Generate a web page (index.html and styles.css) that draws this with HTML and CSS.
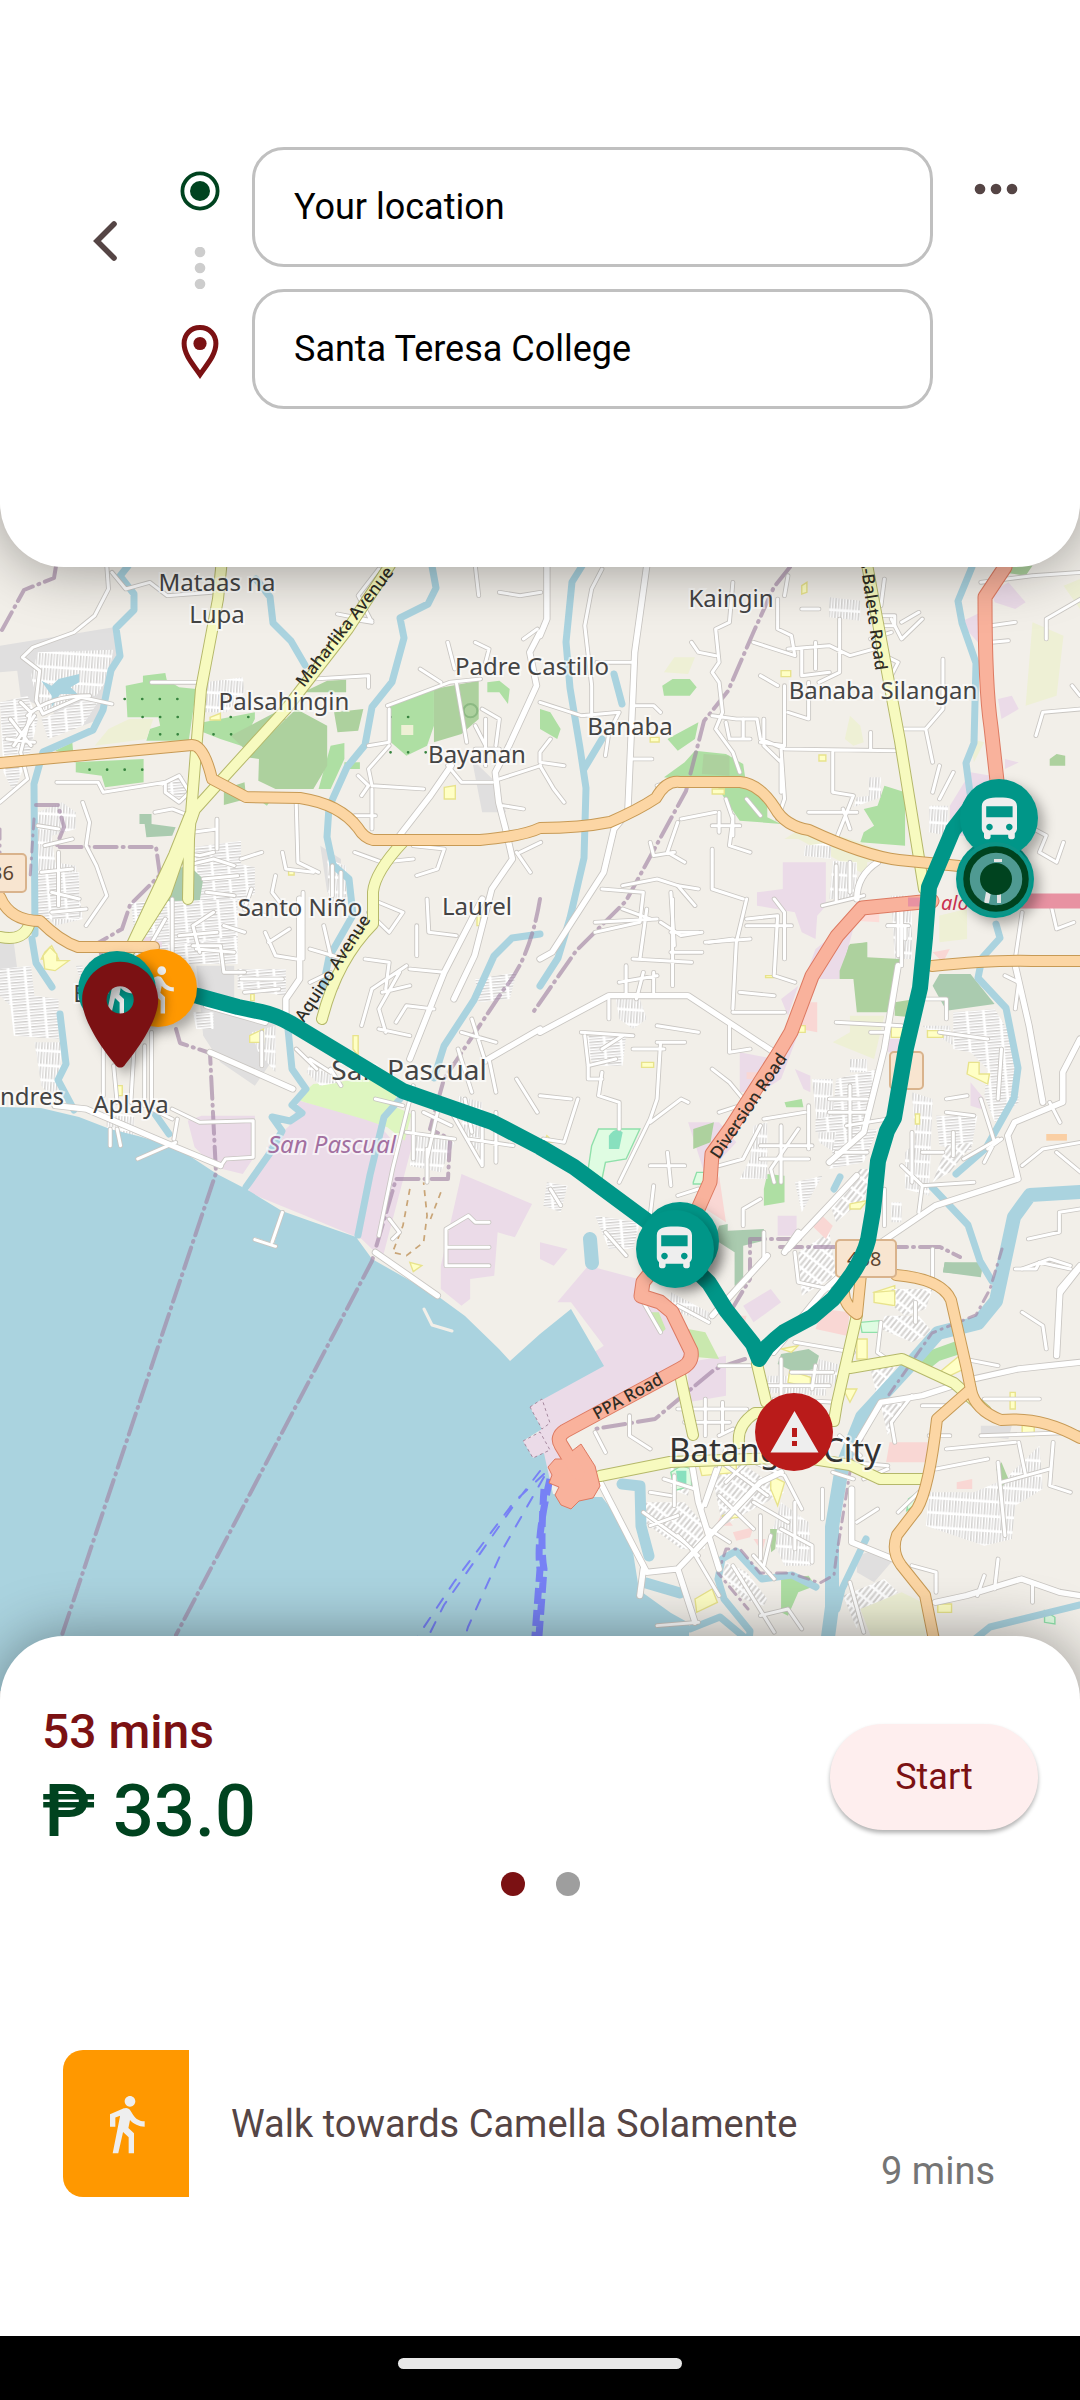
FILE: index.html
```html
<!DOCTYPE html>
<html lang="en">
<head>
<meta charset="utf-8">
<meta name="viewport" content="width=device-width, initial-scale=1">
<title>Trip to Santa Teresa College</title>
<link rel="stylesheet" href="styles.css">
</head>
<body>
<header class="search">
  <button class="icon-button back" type="button" aria-label="Back">
    <svg width="28" height="44" viewBox="0 0 28 44"><path d="M24 5 7 22l17 17" fill="none" stroke="currentColor" stroke-width="5.600" stroke-linecap="round"/></svg>
  </button>
  <div class="stops" aria-hidden="true">
    <svg width="40" height="40" viewBox="0 0 40 40"><circle cx="20" cy="20" r="17.6" fill="none" stroke="#00431f" stroke-width="3.8"/><circle cx="20" cy="20" r="10" fill="#00431f"/></svg>
    <svg width="40" height="42" viewBox="0 0 40 42" fill="#cdcdcd"><circle cx="20" cy="5" r="5.3"/><circle cx="20" cy="21" r="5.3"/><circle cx="20" cy="37" r="5.3"/></svg>
    <svg width="40" height="54" viewBox="0 0 40 54"><path d="M20 2.6C10.5 2.6 4.100 9.600 4.100 18.500 4.100 30 13.500 40 20 49.500 26.500 40 35.900 30 35.900 18.500 35.900 9.600 29.500 2.600 20 2.600Z" fill="none" stroke="#7b1113" stroke-width="5"/><circle cx="20" cy="18.500" r="6.600" fill="#7b1113"/></svg>
  </div>
  <form class="fields">
    <input class="field" type="text" aria-label="From" value="Your location">
    <input class="field" type="text" aria-label="To" value="Santa Teresa College">
  </form>
  <button class="icon-button more" type="button" aria-label="More options">
    <svg width="44" height="12" viewBox="0 0 44 12" fill="currentColor"><circle cx="6" cy="6" r="5.300"/><circle cx="22" cy="6" r="5.300"/><circle cx="38" cy="6" r="5.300"/></svg>
  </button>
</header>

<main class="map">
<svg class="map-canvas" viewBox="0 504 1080 1197" preserveAspectRatio="xMidYMid slice" role="img" aria-label="Route map, San Pascual to Batangas City">
<defs>
  <pattern id="blocks-v" width="17" height="44" patternUnits="userSpaceOnUse" patternTransform="rotate(4)"><rect width="17" height="44" fill="#cfcdcb"/><path d="M4 0v44M12 0v44" stroke="#fff" stroke-width="5"/><path d="M0 5h17" stroke="#fff" stroke-width="8"/></pattern>
  <pattern id="blocks-h" width="48" height="17" patternUnits="userSpaceOnUse" patternTransform="rotate(-5)"><rect width="48" height="17" fill="#cfcdcb"/><path d="M0 4h48M0 12h48" stroke="#fff" stroke-width="5"/><path d="M5 0v17" stroke="#fff" stroke-width="8"/></pattern>
  <pattern id="blocks-d" width="26" height="40" patternUnits="userSpaceOnUse" patternTransform="rotate(38)"><rect width="26" height="40" fill="#d4d2d0"/><path d="M5 0v40M18 0v40" stroke="#fff" stroke-width="7"/><path d="M0 5h26" stroke="#fff" stroke-width="8"/></pattern>
  <path id="bus" d="M4 16c0 .88.39 1.670 1 2.220V20c0 .55.45 1 1 1h1c.55 0 1-.45 1-1v-1h8v1c0 .55.45 1 1 1h1c.55 0 1-.45 1-1v-1.780c.61-.55 1-1.340 1-2.220V6c0-3.500-3.580-4-8-4s-8 .5-8 4v10zm3.500 1c-.83 0-1.500-.67-1.500-1.500S6.670 14 7.500 14s1.500.67 1.500 1.500S8.330 17 7.500 17zm9 0c-.83 0-1.500-.67-1.500-1.500s.67-1.500 1.500-1.500 1.500.67 1.500 1.500-.67 1.500-1.500 1.500zm1.500-6H6V6h12v5z"/>
  <path id="walk" d="M13.500 5.500c1.100 0 2-.9 2-2s-.9-2-2-2-2 .9-2 2 .9 2 2 2zM9.800 8.900L7 23h2.100l1.800-8 2.100 2v6h2v-7.500l-2.100-2 .6-3C14.800 12 16.800 13 19 13v-2c-1.900 0-3.500-1-4.300-2.400l-1-1.600c-.4-.6-1-1-1.700-1-.3 0-.5.1-.8.1L6 8.300V13h2V9.600l1.800-.7"/>

  <g id="streets">
    <g transform="translate(0 560) scale(.3444 .3333)">
      <path d="M310 20l5 70-40 80-60 50-120 45-30 30 50 40-10 90 20 40 110-50 90 20M325 40l40 50 70-20 50 40 130-10M60 430l30 30-30 120 20 80-80 70M80 470q60-60 180-60M165 670h120l15 30 180-30M240 730l20 60-10 70 30 60 30 90-60 90M450 760l50-10 50 20M440 370h150M910 360l160-10v35M1100 30l-60 80 40 80-60-10M980 165l100 20M1380 20l10 90M1450 100l60 10 60-10M1220 330l60 40M1125 440l180-70 90-10M1325 370l30 180M1130 450v100l-60 10M1130 560l-60 70 10 50 150 10M1080 690v120M1200 860l90 10-20 60-60 20M1300 620l40 50h90M1380 250l40 20-10 40M1520 240l40-30M1400 450l50 30-10 80M1450 660l120-40M1460 740l60 10M860 730l5 180 60 30M820 880l10 50 80 10M800 950l-10 50 30 40M1100 1030l70 30-40 60-60-60M1240 1020l5 100 80 10M630 780v90M560 820l70-10M700 900l60-20M730 990l-20 60 60 20M880 1000v200M940 1100l20 90M1210 1100v90M1030 770h60M1030 880l80 30 90-10M1300 250l20 80M1040 650l30 30-20 30M1510 880l60-30M1500 880l40 60M480 670l40-20 30 50-30 30-40-30Z"/>
      <path d="M520 880l60 10 40-10M540 920l80-20 60 20M590 960l100-10M600 1000l80 10M620 1060l-60 40 20 80M650 1100l60 20M480 1080l-50 90M520 1130l110-10M570 1170l110 10M110 800l60 10M130 860l80-20M120 940l90-10M150 1000l80 20M150 1060l100-10M170 880v160M30 480l60 80M20 540l80 10M100 470l-60 90M1380 500l30 60 0 60M1410 480v90M1380 570h70M990 940v80M965 920v90"/>
      <path class="wide" d="M1568 220l-30 60 20 100-80 180-40 80 10 90 20 80 20 90-60 90-50 200-60 130M1310 620l-60 90-90 120"/>
    </g>
    <g transform="translate(540 560) scale(.3444 .3333)">
      <path class="wide" d="M310 20l-35 260-20 480-40 50-30 130-150 240L0 1200M20 20v160L0 230"/>
      <path d="M180 30l-30 60-20 110 20 180v90M0 430l120 40 110-10-30 60-10 70M275 310h-110M270 440h60l20 20M265 600h60M560 70l-10 120-40 20 10 100-20 30 20 30 10 90-20 50 50 70 20 60M440 250l20 30 50 10M690 120v90l40 20 10 60-120-40M720 50l-10 60M720 270l120-10 60 30 70-20M760 270v80l80-10M800 250v80M870 180v160l-60 30M690 380l-50-30M710 380v180l-70-10M500 470l70 10 60 0 10 60 70 30 320 5M650 480v80l50 50M850 580v120l60 10-50 130 80 30M700 570l10 150-20 60M780 370v110l-60-20M1020 180l30 60 60-60M1000 290l40 20-20 40M1170 300v150l-50 60 20 100M1040 510h80M960 520v50M1000 60l-10 80M340 680l60-20 100 0M540 720l20 60-10 80 60 20M400 790l-30 90 50 30M410 780l100-20M320 850l10 40 60-10M180 990l120 10-10 90-130 30M380 1000l10 160M400 980l60 10M500 870v120l90 30M560 770v60M600 1100h130M700 600v100M480 1150l130-10M680 1020l30 40v140M780 760l140 0M880 750l20 60M1160 720l40-80M1160 620l-20 80M1280 70l150-20 140-10M1310 200l70-10M1310 250l50-5M1470 240v-60l100-60M1440 530l20-70 110-10M1545 380l23 30M1380 780l90 50-20 50 50 30 20-60M1400 1060l-20 140M1480 1020l20 90 50-20M30 540l-30 40 0 30 70 10M0 620l40 70 30 40"/>
      <path d="M240 980l100-20 60 20 50 60M240 1050l80 30M350 1090l60 40 60-10M520 760v60M500 800h80M600 720l40 50M760 150l50 0M980 170h50v30h-50ZM1100 160l-50 30M960 240l60-20M540 490l10 50 60 0M590 480v60M820 1040l120-30M860 920v110M900 910v90M1040 1040v150M1010 1100h60"/>
      <path class="wide" d="M980 910q-60 40-60 110"/>
    </g>
    <g transform="translate(0 900) scale(.3444 .3333)">
      <path class="wide" d="M1400 0l-30 60-80 160-100 260M870 0v240l-40 60v60M160 620l90 10 250 110 140 60M600 320l170 50M1090 1060l180 130M1568 390l-150 90M610 460l240 110"/>
      <path d="M300 400v190M330 500l10 110M390 430l-10 180M420 440v180M440 400v230l60 30M500 630l80 40 155-5v110l-80 5-10 15M515 660l-10 60M400 780l110-50M320 690v50M340 690l10 50M820 940l-30 90M740 1022l60 20M1420 970h-40l-20-20-65 40v110h125M1300 1045h120M1200 560l-60 250-40 200M1230 640l80 40M1240 600l60 20 100 180M1350 600l20 100M1440 640v150M1480 700l50 30M1180 200l-100 70-30 110M1060 180l70 10-10 80M1190 210l100 10M1150 370l30-50 80 10M1100 390l90 20M1330 450l40 130M1420 480l20 100M1500 540l60 100M1240 750v100M1130 960l30 40-20 20M900 150l100 30M900 250l60-30M900 480l60 40M860 450l60 60M960 510l30 50M500 0v200M560 140h80l10 80h60M1090 600l80 20M770 100l30 70 60 10M780 130l60-40M700 240l120 0M710 280l100-10M760 400v100M1110 280l80-20M1160 220l-60 110 20 70M1340 400l100 30M1370 360l40 130M1200 640v140M1270 640l-30 140M1180 700l140 20M1360 720l130 20M1400 660v140"/>
    </g>
    <g transform="translate(540 900) scale(.3444 .3333)">
      <path class="wide" d="M0 400l200-110 230 0 250 170M1040 200l-40 250-60 250-100 90M1380 200l40 180 40 230M1568 420l-50 100 0 90-140 60-20 40 30 130-240 80-200 140-130 120-140 180M720 1050l200-220M750 1000l-40 60"/>
      <path d="M160 70l180-10M310 30l-20 150M385 0v260M380 100h80M380 160h90M270 180l170 10M300 220l-20 80M600 0l-30 130-10 200M490 130l70-10M600 60l90-10-10 180 60 20M580 280l100 10M560 340h150M550 380v80l60-10M120 400l150 10M130 410l10 90 80-20M200 300v60M340 380l120 20M340 430h80M350 430l-10 170-20 60-90 190M180 520l-10 70 60 20v80M320 670l90-70 20 10M110 600l-40 130-60-10M0 590l90 10M500 510l50 40 40 50M520 640l60-20M520 800l70-20 50-100M650 660l120-20M750 690l-80 120 10 40M860 370l190 10M960 400l50 0M890 680l120-20M1110 860l150-10M1180 600l60-10M1180 640l80 10M1280 600l40 130-30 60M1340 720l-40 30M1480 610l30 60M1400 800l60-50 110-20M1500 760l70 60M1568 930l-60 10v60l-90 20M1400 1110l80-30 60 20M1568 1110l-60 80M1110 860l-10 80M370 760l10 100M320 800h100M330 860l-10 90M400 890l60-20M30 870l30 50M190 1000l60 70M740 1060l10 90 90 20M650 1000v80M1000 870v110M640 900l-50 30v50M1350 230l40 20-10 80M1100 300h80v60"/>
      <path d="M250 200v90M330 220v60M230 250l110-20M140 500v40h40M180 450l60-40M270 450h90M640 740l150 0M640 780h140M700 680v170M780 620v130M840 600h110M840 640h110M900 560v170M860 760h90M1050 800l60 60M1080 700v150M1110 760h60M1200 700v70M1230 780l100-60M1010 80h50v40M1050 0v200M1160 400l140 20M1340 450l-10 150"/>
    </g>
    <g transform="translate(540 1250) scale(.3444 .3333)">
      <path class="wide" d="M170 690l90 180 50 100 90-10 240-260 60-30M440 640l20 120 60 200M660 20l-160 180M905 720v160l120 50M1568 340l-180 20-130 30M910 600l80-140 120-20 90-30M1568 1040l-60-10-110-40-160 50-90 20M1500 320l10-200 58-70M300 960l-10 80M400 960l50 160"/>
      <path d="M300 160l50 90M400 170l90 50M520 350h90M640 410h200M680 450l180 10M700 440v-110M740 280l170 30M990 220l-10 90 40 30M560 540l-40 20M470 780l40-120M520 740l100 100M380 740l-60-10M300 790l120 90M320 830l80-30M450 720l-90-30M600 640l-60 60M560 950l60 100 60 100M620 920l60 70M670 860l-20 90M700 840l90 50v50M490 840l60 40M580 620l130 60 50 100M260 500v60l60 40M160 550l30 60M850 670l60 20M980 780l-60 40M900 1000l40 150M1080 440l-60 80 10 60M1130 560h60M1290 450h160M1280 560l290-10M1380 60h60l10-20 90 20M1400 190l60 40 10 70M1490 580l-10 130 60 20M1430 1000v60M1330 930l-10 90M1290 980l-20 60M1080 950l70 20 0 60M1110 470h100M440 900l80 140M850 370h-120M800 350l-10 70M1010 660l-70 30M1100 730l-60 60"/>
      <path d="M420 520h130M400 480h200M480 450v110M530 460v90M390 680v90M500 620l160 120M540 600l-60 170M620 760l100 60M640 800v130M740 760v140M820 720v90M400 860l60 60M340 1130l120-10M640 1100l80-20 40 60M870 560l60 60M900 640l110 10M1150 660l150-30M1180 600l200-20M1330 640l20 220M1390 580l20 100M1230 330l100 20M1090 160v60M1140 0v100M1340 700l140-40"/>
    </g>
  </g>

  <g id="secondary">
    <path d="M222 560l-4 40-17 90-12 150-1 60M195 810l-29 84-38 60M390 566l-42 64-62 80-60 66-36 40-16 40-46 98M403 843q-28 30-30 50v32q-36 36-51 95M866 560l34 182 24 148M0 938q25 5 30-15"/>
    <path d="M857 1316l-20 88-3 18q-30 0-44-8l-35 0q-18 12-16 30M757 1365l9 38M850 1369l52-9 52 24 32 28M679 1371l14 65M600 1477l70-14 130-5 50 8 30 14h45"/>
  </g>
  <g id="primary">
    <path d="M0 764l192-18q12 0 20 34l34 18 54 1q40 6 58 30 6 10 15 12h107q44-4 60-12 40 0 70-6 28-12 46-24 10-18 24-16h60q20 2 35 26 10 18 34 22 56 26 90 30l60 6M0 898q10 24 40 24 20 20 38 26h76M932 967q60-6 100-5h48"/>
    <path d="M896 1276q46 4 55 25l16 70 4 20q4 20 30 30 40-4 79 18M971 1390l-34 30q-8 70-20 90l-20 26q-6 16 4 30l24 30 10 50M861 1275l-4 40q-14-10-13-24"/>
  </g>
  <g id="trunk">
    <path d="M1005 568l-20 30q0 90 6 130l10 90M932 902L862 909 837 937 812 977 791 1033 778 1055 730 1130 712 1155 710 1183 698 1210 660 1262 643 1283 641 1297 660 1303 672 1313 691 1352Q693 1364 680 1370L565 1432Q556 1438 561 1446L578 1474"/>
  </g>
</defs>

<rect y="504" width="1080" height="1197" fill="#f2efe9"/>

<!-- land use -->
<g transform="translate(0 560) scale(.3444 .3333)">
  <path fill="#e0dfdf" d="M0 260l330-55 20 75-60 200-50 20-180-85-10-80-50 5ZM1370 600l60 60 40 100-70 0ZM930 860l60 40 0 100-40 0Z"/>
  <path fill="url(#blocks-v)" d="M110 280l220-8-20 90-30 48h-50l-110 60-30-120ZM110 760l70-30 40 30v50l-70 20 10 80 60 10 20 160-80 20-60-100ZM595 370l110-15 5 45-50 60h-70ZM950 900l55 20v110l-50 10Z"/>
  <path fill="url(#blocks-h)" d="M0 430l80-20 30 70-20 90-50 130-30-60ZM120 480l130-60 40 0-50 80-100 40ZM520 870l180-25v70l40 10v80l-50 20v190H370l80-160 130-30 10-70-60-30ZM470 680l60-30 20 60-50 10ZM110 940h120v140H110Z"/>
  <path fill="#aedfa3" d="M365 380l50-10v-20l65-8 4 20 36 23 50 5-22 155H425l10-35 30-10-5-25h-90ZM160 575l50-25 5 60 202-10v70l-112 15-10-35-75-10v-50ZM590 490l150-30v20l-40 80-60-20-50-20ZM960 560l40-8v48l-40 90h-35ZM1130 440l130-50v110l-20 60-60 30-45-40ZM1415 370l35-5 30 25-5 45-25-35h-35ZM1000 610h45v20h-45ZM755 725l30 0-10 15Z"/>
  <path fill="#add19e" d="M715 595l145-145 90 50v120l-40 70H800l-50-25 2-65ZM670 530l130-70 30 20-120 90ZM880 400l70-35 55-3v38ZM970 460l85-10-15 65-60 5ZM1260 390l130-25v115l-50 45-80 25ZM650 690l60-20 5 50-65 18Z"/>
  <path fill="#aacbaf" d="M405 765h35v30l70 10-10 25-75 5-5-40h-15ZM480 935l70-15 40 40-10 65-130 10Z"/>
  <path fill="#eef0d5" d="M275 560l40-50 60-30 70 0-20 60ZM1165 498h35v30h-35Z"/>
  <path fill="#ffffc5" stroke="#e8e38c" stroke-width="4" d="M610 475l30-12v20h-30ZM1290 685l32-5v40h-32ZM838 932h16v16h-16ZM130 1180l20-20 20 40h-50ZM1385 1070h10v30h-10Z"/>
  <path fill="#ebdbe8" d="M395 1130l75-20v55h-75Z"/>
  <path fill="#aad3df" d="M120 365l30 15 20-20 60-15v25l-25 15 20 20-50 0-25 40 0-35Z"/>
  <path stroke="#37843f" stroke-width="8" stroke-linecap="round" stroke-dasharray="0 51" d="M362 420h190M414 474h120M465 526h80M260 632h180M620 526h60M670 474h60M1134 474h60M1134 580h110"/>
  <circle cx="1366" cy="455" r="20" fill="none" stroke="#8cb983" stroke-width="6"/>
</g>
<g transform="translate(540 560) scale(.3444 .3333)">
  <path fill="#ebdbe8" d="M705 910h125v130l-25 30-5 70-40-20-20-60-110-20v-40l75-10ZM1310 100l50-30 50 60-30 20-60-20ZM1220 190l60-30v100ZM1330 420l40-10 20 40-50 30ZM1190 740l60-100 60 10-60 180h-60ZM1350 600l40 10-40 20Z"/>
  <path fill="#aedfa3" d="M0 450l30 10 30 50-10 30-50-30ZM355 380l30-20 50 0 20 25-20 25-75 0ZM370 540l90-50-10 50-50 35ZM420 610l30-35 90 10 50 30 10 70 60 30v60l40 20-120-10-40-60-30-50-150-20ZM940 750l40-10 20-60 60 20 0 160-130-10 10-30 30-20Z"/>
  <path fill="#add19e" d="M475 585l75 5v60l-80-5ZM1340 40l30-20h60l-20 30ZM1480 600l20-15 25 5v30h-45ZM890 1160l60-10v50h-70Z"/>
  <path fill="#eef0d5" d="M360 340l30-45 60 0-20 50ZM885 540l15-70 30 30 10 50-30 10ZM710 840l60-40 160 50 100 40-80 20v40l-200-110ZM1430 190l90 40-20 180-90 30ZM1520 80l48-20v90ZM1160 1070l80-20-10 80-70 15ZM1250 540l40 10-30 60Z"/>
  <path fill="url(#blocks-v)" d="M840 115l90 10v60l-90-10ZM955 655l35 0 0 60-80 30 10-30 35-5ZM1130 740h55v90l-55-10ZM770 860l75-10v50l-80-10ZM850 905l70 5 0 110-80 0ZM1020 1010l60 0v190h-50Z"/>
  <path fill="#fddcd8" d="M940 1050l45-10v50l-70-5Z"/>
  <path fill="#ffffc5" stroke="#e8e38c" stroke-width="4" d="M700 335h28v18h-28ZM760 80l15-10v30l-15 5ZM810 588h20v18h-20ZM500 690h35v15h-35ZM320 535h26v14h-26Z"/>
</g>
<g transform="translate(0 900) scale(.3444 .3333)">
  <path fill="#e0dfdf" d="M570 200h110v100l120 70v100l-60 90-100-70-50-80ZM0 130l40 0 10 80-50 10Z"/>
  <path fill="#ebdbe8" d="M545 665l40-15h155v120l-35 55-80-20-60-60ZM720 880l60-140 60-60 30-75 220 60 50 60 60-30v30l-90 355-60-60-140-60ZM1340 825l205 90-50 100-50-15-10 130-70 10v60l-25 20-60-50 0-70 22-100Z"/>
  <path fill="#def6c0" d="M860 600l50-45 100-10 80-10 60 30v60l45 20-20 80-50-40-70-25-170-50Z"/>
  <path fill="url(#blocks-h)" d="M0 210l90-10 10 90 70 10 0 120-130-10-10-90-30-30ZM380 10l310-10v110l-190 30-110-40ZM690 210l140 0v80l-140-20ZM1380 240l120-20-20 80-90 10ZM560 340h60v50h-50ZM220 200h20v60Z"/>
  <path fill="url(#blocks-v)" d="M100 430l80 0-10 190-50-60ZM730 400l70-20v140l-50-60ZM1200 700l120 30-40 90-90-20ZM900 490l90 60-60 10-40-40ZM1330 590l70 20v150l-50-30ZM310 640l80 10v60l-80-10Z"/>
  <path fill="#ffffc5" stroke="#e8e38c" stroke-width="4" d="M125 170l20-25 20 20 0 20 35 0-40 30-30-5ZM335 560h20v30h-20ZM725 410l40-20v40h-40ZM1025 410l15 0v60l-15-20ZM1190 1090l35 10-25 18ZM728 285h10v20h-10Z"/>
  <path fill="#f3d6d8" d="M960 240h25v30h-25Z"/>
  <path fill="none" stroke="#c9a577" stroke-width="5" stroke-dasharray="18 16" d="M1190 870l-20 110-30 80 40 10 50-40 10-80-10-100M1280 880l-30 80"/>
</g>
<g transform="translate(540 900) scale(.3444 .3333)">
  <path fill="#ebdbe8" d="M800 150l120-100-50 190-60 0-110 300-60 40-60 0V460l100 20ZM430 670l90 0 50 60-90 100ZM700 300l50-40-30 90ZM0 1030l80 20-40 50-40-20ZM690 950h55v60h-55ZM740 510l45 20v50l-20-10ZM1250 550l40 50-10 30-30-10ZM1010 420h50v40h-50Z"/>
  <path fill="#add19e" d="M870 215l30-80 50-5v45l95 5-30 160-95 0-10-100-40 0ZM1030 310l60-10-10 55-50-5ZM445 690l60-20-10 60-50 20Z"/>
  <path fill="#aacbaf" d="M1140 260l20-35 90 0 70 90-140 20ZM520 980l25-5 0 20 105-5v35l-60 15v120h-25l0-100-60-40ZM1175 1090l110 10-5 35-110-15Z"/>
  <path fill="#aedfa3" d="M650 870l10-45 50 5v80l-60 10ZM710 610l50-10 5 25h-50Z"/>
  <path fill="#dffce2" stroke="#8fe0aa" stroke-width="4" d="M150 740l20-50 120 0-40 90-60 10-10 50-40-30ZM445 850l10-30 25 0-5 35-30 0Z"/>
  <path fill="#88e0be" d="M200 710q20-30 40-10l-10 50h-30Z"/>
  <path fill="#eef0d5" d="M850 430l50-30 0-50 100 0-30 130ZM1160 50l80-20v90l-80 10Z"/>
  <path fill="url(#blocks-v)" d="M220 300l70 0 20 60-40 30-40-30ZM790 540l60 0v60l50 20v170l-90-60ZM620 680l40-10v170l-80 0 30-60ZM1080 580l60 20-10 290-70-20 0-110 30-30ZM1110 380l80 0 10 60ZM900 480h50v40h-50ZM1020 910h30v60h-30Z"/>
  <path fill="url(#blocks-h)" d="M860 540l120-30-40 190-140 0 0-40 50-10ZM130 410l120 0-10 90h-80l-20-30ZM1200 340l120-10 60 100 10 180-70 60-30-80 10-80-50-50-50-10ZM860 700l120-10-40 100-100 20ZM740 850l80-20-60 110ZM20 850l60 10-20 80-50-20ZM1150 650h120l-20 110-90-20ZM160 950l130 20-20 80-70 0Z"/>
  <path fill="url(#blocks-d)" d="M840 910l90-100 40 0-30 90-80 70ZM1180 740l80-10-70 90-50 30ZM750 1060l90-60 20 130-100 60Z"/>
  <path fill="#f9d7d4" d="M770 310h35v90l-50-10ZM520 830l20 140-60-40ZM790 980l30-30 30 30-20 40ZM1140 160l50-10-20 40ZM600 520h40v20h-40Z"/>
  <path fill="#ffffc5" stroke="#e8e38c" stroke-width="4" d="M1020 380l50 0v35h-50ZM1125 395h45v20h-45ZM1245 490h30v35l30 0-5 30-60-30ZM295 490h35v15h-35ZM900 915l50-10-20 25h-30ZM1090 645h12v30h-12ZM750 380h20v20h-20ZM655 230h35v6h-35ZM20 710l20 20h-30ZM970 1180l60-20v40Z"/>
  <path fill="#facfa4" d="M1470 705h60v20h-60Z"/>
</g>
<g transform="translate(540 1250) scale(.3444 .3333)">
  <path fill="#ebdbe8" d="M140 50l145 40 0 60 90 50 50 120-50 50-340 220 80 110 50 70-60 30-50-80-60-40 0-180 0-80 90-60 100-70-95-130-40 0ZM430 340l110-20 0 120-110 20ZM590 170l80-50 30 40-80 60Z"/>
  <path fill="#c9e8ae" d="M430 240l50 10 40 80-60-5ZM320 190l25 0 20 50-10 10Z"/>
  <path fill="#aacbaf" d="M700 315l80-15 30 20-10 40-60 10-50-25ZM1175 40l110 0-5 40-110-10Z"/>
  <path fill="#aedfa3" d="M1090 320l135-50-5 45-60 20-30 25ZM700 990l80-10 20 30-50 20-30 70-20-10Z"/>
  <path fill="#f9d7d4" d="M800 240l20-60 80 10-10 70ZM1005 640l10-60 110 0v60ZM510 830l20-40 30 40ZM560 200l40 0-10 40ZM620 870l35 0-10 40ZM560 850l60-15-10 30-40 10ZM1210 700l45-10v30h-45Z"/>
  <path fill="url(#blocks-v)" d="M700 760l80 60 10 130-80 0-40-90ZM1130 730l130 0 90-40 100-100 10 130-80 50-10 100-80 20-170-60ZM380 130l130 70-20 20-120-40ZM650 380l180 0 0 60-180-10ZM810 330l70 20-10 60-70-20Z"/>
  <path fill="url(#blocks-d)" d="M300 760l120 0 50 60 10 80-70 0-120-90ZM500 680l80-40 130 90-90 50-90 50ZM540 940l60 30 60 80-10 20-60-20-60-70ZM880 1040l120-50 40 40-110 60-10 50ZM960 360l80-20-60 110ZM1000 200l100 0 40 50-60 30-90-40ZM1020 120l120 0-20 60-60 20-50-40ZM990 470l80-30-60 120ZM380 650l60 10-10 80-50-20Z"/>
  <path fill="#ffffc5" stroke="#e8e38c" stroke-width="4" d="M725 365l60 20v30l-65-15ZM970 130l60-5v45l-60-10ZM920 270h30v60h-30ZM1160 370l70-60v50l-60 30ZM670 680l40 20-20 70-20-50ZM460 640l110 0v30l-100 10ZM450 1050l50-30 15 40-60 30ZM880 420h40l-20 40ZM1365 430h15v50h-15ZM1400 530h35v30h-35ZM1155 1065h40v25h-40ZM530 800l30-10 20 15-50 5ZM700 300l50-10-20 20Z"/>
  <path fill="#dffce2" stroke="#8fe0aa" stroke-width="4" d="M380 670l30-20 30 10 0 50-50 15ZM930 220l55-5v35l-50 0ZM1070 750l40-30-15 45-30 20ZM1465 1085l30 20v20l-30-5Z"/>
  <path fill="#88e0be" d="M395 665h30v40h-25Z"/>
  <path fill="#eef0d5" d="M930 1080l120-50 60 30 10 100H960Z"/>
  <path fill="#add19e" d="M1325 660l15-20 20 50-20 25ZM668 840h20l-5 60-12 10Z"/>
  <path fill="#e0dfdf" d="M920 920l60-20 40 40-50 60-50-30ZM1280 530l90 0-10 40-80-10Z"/>
</g>

<!-- sea and rivers -->
<path fill="#aad3df" d="M0 1108l41 1 38 9 31 12 28 7 38 11 41 27 29 15 36 22 31 11 43 15 16 22 67 38 26 19 34 33 11 12 30-27 31-25 33 57-64 35-10 6 12 22-19 12 12 16 8-8 10 45 25 3 24 0 28 36 9 57 32 23 18 10v68H0Z"/>
<path fill="#ebdbe8" stroke="#a78aa0" stroke-width="1" stroke-dasharray="3 3" d="M530 1408l12-8 8 24-8 6ZM523 1442l17-9 10 18-17 8Z"/>
<g class="river">
  <path d="M128 567l-8 10 14 18v16l-18 18 4 28-9 14-8 40-10 20-50 22-9 32 1 150M256 580l14 18 3 26 18 18 14 24M432 567l4 22-8 16-28 14 4 20-12 44-20 25-7 38-18 22-18 40-2 30 6 28 16 14 4 36-24 42-6 30M582 567l-10 16-6 60 4 46 10 60 6 40-2 70-14 60-12 40-18 28M614 675l8 30M602 740l-18 30M972 568l-14 34 4 22 14 40-2 80-8 20 4 30M996 925l4 14-18 20-4 20 28 30 12 60-4 30-28 50-30 26M32 940l4 24 16 24M60 1015l6 50-8 16 16 30M288 1030l4 40 14 20-14 16M292 1106l10 8-12 8-18-4 10 14-12 22-24 34M540 935l-28 4-18 18-20 44-30 46-10 32M400 1100l-16 18-14 58-12 60M155 1115l14 20M932 1188l36 38 12 36 12 20"/>
  <path class="wide" d="M1080 1193l-50 3-16 22-18 84-18 22-40 10-30 34-46 50-20 50-10 60v80l-12 90M590 1240l2 24"/>
  <path d="M866 1540l-24 50-5 20M718 1580l4-20 14-8 26 28 30-4 24 12M718 1580l6 20 26 32-4 40M690 1630l30-12 24 20M1080 1606l-90 22-30 24M840 1178l-6 12"/>
  <path class="pond" d="M622 1485l18 2 1 40 8 30M646 1584l34 10"/>
</g>

<!-- boundaries and ferries -->
<g class="boundary">
  <path d="M56 567l-2 12-30 12-22 40M36 806l22 0 6 22-8 20 100 0 4 28-30 30-8 24-24 14 4 14M176 1030l4 14 30 10 6 120-160 480M540 900q-10 60-36 90-40 60-60 90l-14 50 20 10-2 40-52 0-24 82-196 374M790 568l-16 20-20 44-26 60-24 30-18 70-60 110-50 50-42 60M800 1240h-50l0 40-24 40M780 1248h160l20 10M745 1360l-30 10-60 50-60 10"/>
  <path class="river-line" d="M1002 1250l-12 40-14 26-44 18-60 86-20 40-16 100-2 16-14 8-30-10-30 0-20-24-14 0-8 24 30 36M0 830v30M34 820l-4 60"/>
</g>
<path class="ferry" d="M544 1475l-30 28-60 80-40 60M544 1478l-40 70-36 80-6 20M540 1472l-26 34-70 100-20 40"/>
<path class="ferry heavy" d="M550 1480q-14 60-10 90l-6 80M544 1490q-4 60 0 80l-6 80"/>
<path class="pier" d="M282 1213l-9 30M255 1240l20 7M424 1310l8 16 20 6"/>

<!-- roads -->
<use href="#streets" class="street-casing"/><use href="#streets" class="street"/>
<use href="#secondary" class="secondary-casing"/><use href="#secondary" class="secondary"/>
<use href="#primary" class="primary-casing"/><use href="#primary" class="primary"/>
<use href="#trunk" class="trunk-casing"/>
<path fill="#f9b29c" stroke="#dd7a62" stroke-width="1" d="M572 1452l-5 8-12 0-7 8 4 8-3 8 10 4-4 8 6 10 10 4 8-8 14-3 7-12-5-20-14-22Z"/>
<use href="#trunk" class="trunk"/>
<path d="M1020 902h60" stroke="#e892a2" stroke-width="15"/>
<path d="M908 903h14" stroke="#e892a2" stroke-width="9"/>

<!-- road shields -->
<g fill="#f8e5d0" stroke="#d9b38c" stroke-width="2">
  <rect x="-34" y="855" width="60" height="38" rx="4"/><rect x="836" y="1241" width="60" height="37" rx="4"/><rect x="890" y="1053" width="33" height="37" rx="4"/>
</g>

<!-- labels -->
<g class="shield-label"><text x="-9" y="881">36</text><text x="847" y="1267">468</text></g>
<g class="place">
  <text x="217" y="592">Mataas na</text><text x="217" y="624">Lupa</text><text x="284" y="711">Palsahingin</text>
  <text x="532" y="676">Padre Castillo</text><text x="477" y="764">Bayanan</text><text x="300" y="917">Santo Niño</text>
  <text x="477" y="916">Laurel</text><text x="731" y="608">Kaingin</text><text x="630" y="736">Banaba</text>
  <text x="883" y="700">Banaba Silangan</text><text x="131" y="1114">Aplaya</text><text x="32" y="1106">ndres</text><text x="81" y="1003">B</text>
</g>
<g class="place town"><text x="409" y="1081">San Pascual</text></g>
<g class="place city"><text x="775" y="1463">Batangas City</text></g>
<g class="place zone"><text x="332" y="1154">San Pascual</text></g>
<g class="road-label">
  <text transform="translate(304 689) rotate(-52)">Maharlika Avenue</text>
  <text transform="translate(860 562) rotate(82)">s-Balete Road</text>
  <text transform="translate(304 1024) rotate(-57)">Aquino Avenue</text>
  <text transform="translate(719 1161) rotate(-56)">Diversion Road</text>
  <text transform="translate(597 1421) rotate(-29)">PPA Road</text>
</g>
<text class="exit-label" x="941" y="911">alo</text>

<!-- route -->
<path class="route" d="M158 989l40 8 40 11 24 5q14 3 30 12l111 67 89 31 48 25 34 20 73 54 28 28 34 34 17 27 27 34 6 15 8-12q8-8 17-15l28-15 21-18q10-12 19-25 12-18 16-34l5-29 5-50 9-30 7-13 12-70 14-60 5-50 4-51 24-57 20-26"/>

<!-- markers -->
<g class="marker"><circle cx="158" cy="989" r="39" fill="#ff9800"/><use href="#walk" fill="#eee" transform="translate(132 964) scale(2.200)"/></g>
<g class="marker"><circle cx="117" cy="991" r="39" fill="#009688"/><use href="#walk" fill="#eee" transform="translate(91 966) scale(2.200)"/></g>
<g class="marker"><path fill="#7b1113" transform="translate(55 952) scale(5.430)" d="M12 2C8.130 2 5 5.130 5 9c0 4.170 4.420 9.920 6.240 12.110.4.48 1.130.48 1.530 0C14.580 18.920 19 13.170 19 9c0-3.870-3.130-7-7-7zm0 9.500a2.500 2.500 0 0 1 0-5 2.500 2.500 0 0 1 0 5z"/></g>
<g class="marker"><circle cx="680" cy="1242" r="39" fill="#009688"/></g>
<g class="marker"><circle cx="675" cy="1250" r="39" fill="#009688"/><use href="#bus" fill="#eee" transform="translate(648 1223) scale(2.200)"/></g>
<g class="marker"><circle cx="995" cy="880" r="39" fill="#009688"/></g>
<g class="marker"><circle cx="999" cy="819" r="39" fill="#009688"/><use href="#bus" fill="#eee" transform="translate(973 794) scale(2.200)"/></g>
<circle cx="995" cy="880" r="37" fill="#0b9487"/><circle cx="996" cy="880" r="28" fill="#4f9a92"/>
<path fill="#e4e4e4" d="M994 860h8v3h-8ZM986 893h5l-2 11h-5ZM997 895h4v9h-4Z"/>
<circle cx="996" cy="880" r="29.500" fill="none" stroke="#00431f" stroke-width="6.500"/><circle cx="996" cy="880" r="16" fill="#00431f"/>
<circle cx="794" cy="1433" r="39" fill="#b91b1a"/>
<path fill="#eee" fill-rule="evenodd" d="M794.500 1412l24 41.500h-48ZM792 1429v9h5v-9ZM792 1442v5h5v-5Z"/>
</svg>
</main>

<section class="sheet">
  <div class="summary">
    <div class="totals">
      <p class="duration">53 mins</p>
      <p class="fare">₱ 33.0</p>
    </div>
    <button class="start" type="button">Start</button>
  </div>
  <div class="pager" aria-label="Step 1 of 2"><span class="dot dot-active"></span><span class="dot"></span></div>
  <article class="step">
    <div class="step-mode"><svg width="64" height="64" viewBox="0 0 24 24" fill="#eee"><use href="#walk"/></svg></div>
    <p class="step-text">Walk towards Camella Solamente</p>
    <p class="step-time">9 mins</p>
  </article>
</section>
<footer class="nav-bar"><span class="nav-handle"></span></footer>
</body>
</html>
```
FILE: styles.css
```css
* {
  box-sizing: border-box;
}

body {
  margin: 0;
  min-height: 100vh;
  display: flex;
  flex-direction: column;
  background: #fff;
  font-family: Roboto, "Noto Sans", sans-serif;
  font-size: 36px;
  color: #554545;
}

p {
  margin: 0;
}

button {
  border: 0;
  padding: 0;
  font: inherit;
  color: inherit;
  background: none;
}

/* Search header */
.search {
  position: relative;
  z-index: 1;
  display: flex;
  align-items: flex-start;
  padding: 147px 52px 158px 72px;
  background: #fff;
  border-radius: 0 0 64px 64px;
  box-shadow: 0 0 60px rgba(0, 0, 0, 0.4);
}

.icon-button {
  display: flex;
  align-items: center;
  justify-content: center;
  width: 64px;
}

.back {
  height: 188px;
}

.more {
  height: 84px;
}

.stops {
  display: flex;
  flex-direction: column;
  gap: 36px;
  padding: 24px 32px 0 44px;
}

.fields {
  flex: 1;
  display: flex;
  flex-direction: column;
  gap: 22px;
  min-width: 0;
  margin-right: 31px;
}

.field {
  width: 100%;
  height: 120px;
  padding: 0 39px;
  border: 3px solid #c0c0c0;
  border-radius: 32px;
  background: #fff;
  font: inherit;
  color: #000;
}

/* Map */
.map {
  flex: 1;
  display: flex;
  min-height: 600px;
  margin: -64px 0;
}

.map-canvas {
  flex: 1;
  width: 100%;
}

.map-canvas use,
.boundary,
.river,
.ferry,
.pier,
.route {
  stroke-linejoin: round;
}

.street-casing,
.street,
.secondary-casing,
.secondary,
.primary-casing,
.primary,
.trunk-casing,
.trunk,
.river,
.boundary,
.ferry,
.pier,
.route {
  fill: none;
  stroke-linecap: round;
}

.street-casing {
  --wide: 21px;
  stroke: #c9c6c2;
  stroke-width: 14px;
}

.street {
  --wide: 16px;
  stroke: #fff;
  stroke-width: 9px;
}

#streets .wide {
  stroke-width: var(--wide);
}

.secondary-casing {
  stroke: #b5b86a;
  stroke-width: 12px;
}

.secondary {
  stroke: #f7fabf;
  stroke-width: 10px;
}

.primary-casing {
  stroke: #c79a55;
  stroke-width: 12px;
}

.primary {
  stroke: #fcd6a4;
  stroke-width: 10px;
}

.trunk-casing {
  stroke: #dd7a62;
  stroke-width: 15px;
}

.trunk {
  stroke: #f9b29c;
  stroke-width: 13px;
}

.river {
  stroke: #aad3df;
  stroke-width: 7px;
}

.river .wide {
  stroke-width: 14px;
}

.river .pond {
  stroke-width: 11px;
}

.boundary {
  stroke: #a184a5;
  stroke-width: 4px;
  stroke-opacity: 0.65;
  stroke-dasharray: 22 6 1 6;
}

.boundary .river-line {
  stroke-width: 3px;
  stroke-dasharray: 10 6 1 6;
}

.ferry {
  stroke: #7781f5;
  stroke-width: 2px;
  stroke-dasharray: 11 12;
}

.ferry.heavy {
  stroke-width: 7px;
  stroke-linecap: butt;
  stroke-dasharray: 16 6;
}

.pier {
  stroke: #f2efe9;
  stroke-width: 3px;
}

.place {
  font-family: "Noto Sans", sans-serif;
  font-size: 24px;
  text-anchor: middle;
  fill: #444;
  stroke: rgba(255, 255, 255, 0.6);
  stroke-width: 4px;
  paint-order: stroke;
}

.town {
  font-size: 28px;
}

.city {
  font-size: 33px;
  fill: #333;
}

.zone {
  font-style: italic;
  fill: #a26fa0;
}

.road-label {
  font-family: "Noto Sans", sans-serif;
  font-size: 17px;
  font-weight: 500;
  fill: #2e2c24;
}

.shield-label {
  font-family: "Noto Sans", sans-serif;
  font-size: 20px;
  fill: #5d4630;
}

.exit-label {
  font-family: "Noto Sans", sans-serif;
  font-size: 20px;
  font-style: italic;
  fill: #c9304f;
}

.route {
  stroke: #009688;
  stroke-width: 16px;
}

.marker {
  filter: drop-shadow(6px 6px 6px rgba(0, 0, 0, 0.3));
}

/* Trip sheet */
.sheet {
  position: relative;
  z-index: 1;
  padding: 64px 42px 139px;
  background: #fff;
  border-radius: 64px 64px 0 0;
  box-shadow: 0 0 60px rgba(0, 0, 0, 0.4);
}

.summary {
  display: flex;
  justify-content: space-between;
  align-items: flex-start;
}

.duration {
  font-size: 48px;
  line-height: 64px;
  font-weight: 500;
  color: #7b1113;
}

.fare {
  font-size: 72px;
  line-height: 96px;
  font-weight: 500;
  color: #00431f;
}

.start {
  width: 208px;
  height: 106px;
  margin-top: 24px;
  border-radius: 53px;
  background: #feeeee;
  color: #7b1113;
  box-shadow: 0 3px 4px rgba(0, 0, 0, 0.3);
}

.pager {
  display: flex;
  justify-content: center;
  gap: 31px;
  padding: 12px 0;
}

.dot {
  width: 24px;
  height: 24px;
  border-radius: 50%;
  background: #9e9e9e;
}

.dot-active {
  background: #7b1113;
}

.step {
  display: flex;
  align-items: center;
  margin: 142px 43px 0 21px;
  font-size: 38px;
}

.step-mode {
  display: flex;
  align-items: center;
  justify-content: center;
  width: 126px;
  height: 147px;
  border-radius: 20px 0 0 20px;
  background: #ff9800;
}

.step-text {
  flex: 1;
  padding-left: 42px;
}

.step-time {
  align-self: flex-end;
  line-height: 52px;
  color: #757575;
}

/* System navigation bar */
.nav-bar {
  position: relative;
  z-index: 1;
  display: flex;
  justify-content: center;
  align-items: center;
  height: 64px;
  padding-bottom: 10px;
  background: #000;
}

.nav-handle {
  width: 284px;
  height: 11px;
  border-radius: 6px;
  background: #e8e8e8;
}
```
